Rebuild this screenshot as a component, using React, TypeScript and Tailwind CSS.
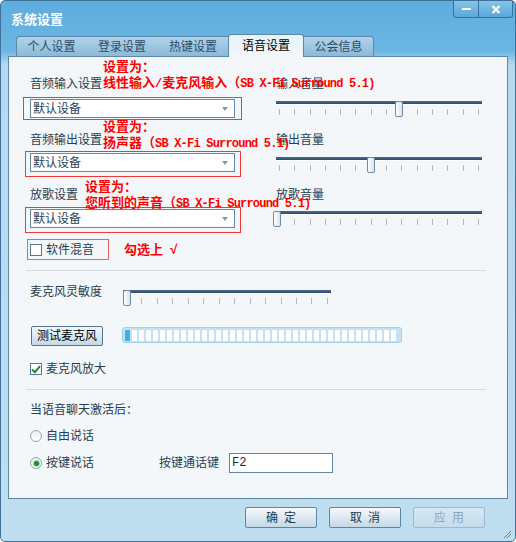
import React from 'react';

const FONT = "font-['Liberation_Sans','Noto_Sans_CJK_SC',sans-serif]";
const MONO = "font-['Liberation_Mono','Noto_Sans_CJK_SC',monospace]";

function Slider({ width, thumb }: { width: string; thumb: string }) {
  return (
    <div className={`relative h-[17px] ${width}`}>
      <div className="mt-[3px] h-[3px] bg-[linear-gradient(#4f6f8e,#2b4766)]" />
      <div className="h-px bg-white" />
      <div className="mt-[4px] flex justify-between px-[3px]">
        {Array.from({ length: 14 }).map((_, i) => (
          <span key={i} className="block w-px h-[6px] bg-[#a8bccd]" />
        ))}
      </div>
      <div
        className={`absolute top-0 ${thumb} w-[8px] h-[16px] rounded-[2px] border border-[#6f8ca6] bg-[linear-gradient(to_right,#ffffff,#d9e4ec)]`}
      />
    </div>
  );
}

function Dropdown() {
  return (
    <div className="w-[205px] h-[19px] border border-[#6288a8] bg-white flex items-center justify-between pl-[2px] pr-[6px]">
      <span className="text-[12px] leading-4 text-[#2c4256]">默认设备</span>
      <span className="w-0 h-0 border-l-[3px] border-r-[3px] border-t-[4px] border-l-transparent border-r-transparent border-t-[#8a99a6]" />
    </div>
  );
}

function Checkbox({ checked }: { checked?: boolean }) {
  return (
    <span className="w-[12px] h-[12px] border border-[#56789a] bg-white flex items-center justify-center shrink-0">
      {checked && (
        <svg width="10" height="9" viewBox="0 0 10 9">
          <path d="M1 4.5 L3.8 7.2 L9 1.2" fill="none" stroke="#1f8a2a" strokeWidth="2" />
        </svg>
      )}
    </span>
  );
}

function Radio({ checked }: { checked?: boolean }) {
  return (
    <span className="w-[12px] h-[12px] rounded-full border border-[#8ba7be] bg-[linear-gradient(#e9eff4,#ffffff)] flex items-center justify-center shrink-0">
      {checked && <span className="w-[5px] h-[5px] rounded-full bg-[#1f8f2c] ring-1 ring-[#a9d8ae]" />}
    </span>
  );
}

function Label({ children, className = '' }: { children: React.ReactNode; className?: string }) {
  return <div className={`h-4 text-[12px] leading-4 text-[#283d51] whitespace-nowrap ${className}`}>{children}</div>;
}

// red hand-written note over the dialog
function Annot({ left, top, cn, en }: { left: string; top: string; cn: React.ReactNode; en: string }) {
  return (
    <div className={`absolute ${left} ${top} z-10 text-[13px] leading-4 font-bold text-[#ff0000] whitespace-nowrap`}>
      <div>设置为：</div>
      <div>
        {cn}
        <span className={`${MONO} text-[12px] tracking-[-0.8px]`}>{en}</span>
      </div>
    </div>
  );
}

function FooterButton({ text, disabled }: { text: string; disabled?: boolean }) {
  return (
    <div
      className={
        disabled
          ? 'w-[72px] h-[21px] rounded-[2px] border border-[#99bad0] bg-[linear-gradient(#d5e8f3,#c4dceb)] flex items-center justify-center text-[12px] text-[#8da6b7] tracking-[6px] pl-[6px]'
          : 'w-[72px] h-[21px] rounded-[2px] border border-[#5c84a5] bg-[linear-gradient(#f7fafc,#c3d8e6)] flex items-center justify-center text-[12px] text-[#1d3a52] tracking-[6px] pl-[6px]'
      }
    >
      {text}
    </div>
  );
}

export default function App() {
  return (
    <div
      className={`${FONT} relative w-[516px] h-[542px] rounded-[5px] border border-[#3f719a] bg-[linear-gradient(to_bottom,#5eaddf_0px,#6bb6e3_50px,#b7d9ee_64px,#bfdff0_100%)] flex flex-col overflow-hidden`}
    >
      {/* title bar */}
      <div className="h-[33px] pl-[10px] pt-[6px]">
        <span className="text-[13px] leading-4 font-bold text-white">系统设置</span>
      </div>
      <div className="absolute top-[-1px] right-[2px] flex">
        <div className="w-[26px] h-[18px] border border-[#3c6f98] rounded-bl-[3px] bg-[linear-gradient(#86c4ea,#5aa7db)] flex items-center justify-center">
          <span className="block w-[9px] h-[2px] bg-white" />
        </div>
        <div className="w-[34px] h-[18px] border border-l-0 border-[#3c6f98] rounded-br-[3px] bg-[linear-gradient(#86c4ea,#5aa7db)] flex items-center justify-center">
          <svg width="10" height="9" viewBox="0 0 10 9">
            <path d="M1.5 1 L8.5 8 M8.5 1 L1.5 8" stroke="#fff" strokeWidth="2.2" />
          </svg>
        </div>
      </div>

      {/* tabs */}
      <div className="relative z-10 h-[22px] ml-[15px] flex items-end text-[12px] leading-4">
        <div className="w-[70px] h-[20px] rounded-tl-[4px] border-t border-l border-[#5b87a9] bg-[linear-gradient(#b1d3ea,#8db9d7)] text-[#2b4d69] flex items-center justify-center">个人设置</div>
        <div className="w-[72px] h-[20px] border-t border-[#5b87a9] bg-[linear-gradient(#b1d3ea,#8db9d7)] text-[#2b4d69] flex items-center justify-center">登录设置</div>
        <div className="w-[70px] h-[20px] border-t border-[#5b87a9] bg-[linear-gradient(#b1d3ea,#8db9d7)] text-[#2b4d69] flex items-center justify-center">热键设置</div>
        <div className="w-[76px] h-[23px] -mb-px rounded-t-[3px] border border-b-0 border-[#5b87a9] bg-[linear-gradient(#e6f3fb,#f3f7f9)] text-black flex items-center justify-center">语音设置</div>
        <div className="w-[70px] h-[20px] rounded-tr-[4px] border-t border-r border-[#5b87a9] bg-[linear-gradient(#b1d3ea,#8db9d7)] text-[#2b4d69] flex items-center justify-center">公会信息</div>
      </div>

      {/* panel */}
      <div className="relative w-[500px] h-[443px] ml-[7px] border border-[#5b87a9] bg-[#f3f7f9] pl-[21px] pt-[19px]">
        <div className="flex h-[56px]">
          <div className="w-[205px]">
            <Label>音频输入设置</Label>
            <div className="mt-[7px]"><Dropdown /></div>
          </div>
          <div className="ml-[41px]">
            <Label>输入音量</Label>
            <div className="mt-[9px]"><Slider width="w-[206px]" thumb="left-[119px]" /></div>
          </div>
        </div>
        <div className="flex h-[55px]">
          <div className="w-[205px]">
            <Label>音频输出设置</Label>
            <div className="mt-[5px]"><Dropdown /></div>
          </div>
          <div className="ml-[41px]">
            <Label>输出音量</Label>
            <div className="mt-[9px]"><Slider width="w-[206px]" thumb="left-[91px]" /></div>
          </div>
        </div>
        <div className="flex h-[41px]">
          <div className="w-[205px]">
            <Label>放歌设置</Label>
            <div className="mt-[6px]"><Dropdown /></div>
          </div>
          <div className="ml-[41px]">
            <Label>放歌音量</Label>
            <div className="mt-[8px]"><Slider width="w-[206px]" thumb="left-[-3px]" /></div>
          </div>
        </div>

        <div className="mt-[14px] h-4 flex items-center gap-[4px]">
          <Checkbox />
          <Label>软件混音</Label>
        </div>

        <div className="mt-[12px] -ml-[4px] w-[460px] h-px bg-[#d2d9dd]" />

        <div className="mt-[13px] flex items-start">
          <Label className="w-[93px]">麦克风灵敏度</Label>
          <div className="mt-[3px]"><Slider width="w-[208px]" thumb="left-0" /></div>
        </div>

        <div className="mt-[19px] flex items-start">
          <div className="ml-px w-[72px] h-[20px] rounded-[2px] border border-[#4f7597] bg-[linear-gradient(#f3f8fb,#c3d8e6)] flex items-center justify-center text-[12px] leading-4 text-black">
            测试麦克风
          </div>
          <div className="ml-[19px] mt-px w-[280px] h-[16px] rounded-[3px] border border-[#a5d0ea] bg-[#c3e2f4] flex items-center gap-[2px] pl-[2px] overflow-hidden">
            {Array.from({ length: 39 }).map((_, i) => (
              <span
                key={i}
                className={
                  i === 0
                    ? 'block w-[5px] h-[11px] rounded-[1px] bg-[#3cafe6] shrink-0'
                    : 'block w-[5px] h-[11px] rounded-[1px] bg-white shrink-0'
                }
              />
            ))}
          </div>
        </div>

        <div className="mt-[15px] h-4 flex items-center gap-[4px]">
          <Checkbox checked />
          <Label>麦克风放大</Label>
        </div>

        <div className="mt-[12px] -ml-[4px] w-[460px] h-px bg-[#d2d9dd]" />

        <Label className="mt-[12px]">当语音聊天激活后：</Label>

        <div className="mt-[10px] h-4 flex items-center gap-[4px]">
          <Radio />
          <Label>自由说话</Label>
        </div>

        <div className="mt-[9px] h-[20px] flex items-center">
          <Radio checked />
          <Label className="ml-[4px]">按键说话</Label>
          <Label className="ml-[65px]">按键通话键</Label>
          <div className="ml-[10px] w-[104px] h-[20px] border border-[#5f86a6] bg-white flex items-center pl-[2px]">
            <span className={`${MONO} text-[12px] leading-4 text-[#1d2c3a]`}>F2</span>
          </div>
        </div>

        {/* red annotations */}
        <Annot
          left="left-[94px]"
          top="top-[2px]"
          cn={
            <>
              线性输入<span className={`${MONO} text-[12px]`}>/</span>麦克风输入（
            </>
          }
          en="SB X-Fi Surround 5.1)"
        />
        <Annot left="left-[94px]" top="top-[62px]" cn="扬声器（" en="SB X-Fi Surround 5.1)" />
        <Annot left="left-[76px]" top="top-[122px]" cn="您听到的声音（" en="SB X-Fi Surround 5.1)" />
        <div className="absolute left-[14px] top-[40px] w-[219px] h-[23px] border border-[#f03a3a]" />
        <div className="absolute left-[16px] top-[94px] w-[216px] h-[26px] border border-[#f03a3a]" />
        <div className="absolute left-[16px] top-[150px] w-[216px] h-[26px] border border-[#f03a3a]" />
        <div className="absolute left-[18px] top-[182px] w-[82px] h-[21px] border border-[#f06060]" />
        <div className="absolute left-[115px] top-[185px] text-[13px] leading-4 font-bold text-[#ff0000] whitespace-nowrap">
          勾选上&nbsp;&nbsp;√
        </div>
      </div>

      {/* footer */}
      <div className="mt-[8px] flex justify-end gap-[12px] pr-[30px]">
        <FooterButton text="确定" />
        <FooterButton text="取消" />
        <FooterButton text="应用" disabled />
      </div>

      <svg className="absolute right-[4px] bottom-[3px]" width="8" height="8" viewBox="0 0 8 8">
        <path d="M1 8 L8 1 M4 8 L8 4" stroke="#5c7f9c" strokeWidth="1" />
      </svg>
    </div>
  );
}
